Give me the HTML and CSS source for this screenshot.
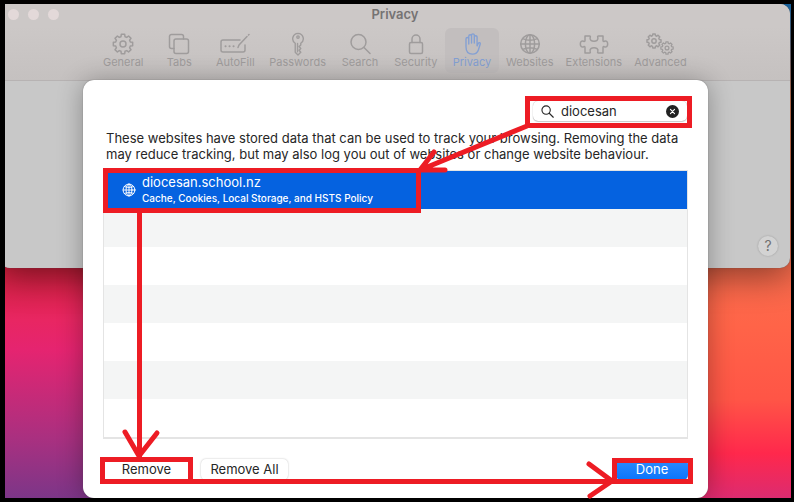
FILE: index.html
```html
<!DOCTYPE html>
<html lang="en">
<head>
  <meta charset="UTF-8" />
  <title>Privacy</title>
  <meta name="viewport" content="width=device-width,initial-scale=1" />
  <link rel="stylesheet" href="styles.css">
</head>
<body>

<!-- Shared icon shapes -->
<svg class="defs" aria-hidden="true">
  <symbol id="globe" viewBox="0 0 22 22">
    <circle cx="11" cy="11" r="9.3"/>
    <ellipse cx="11" cy="11" rx="4.6" ry="9.3"/>
    <path d="M11 1.7v18.6M1.7 11h18.6M3.6 5.6c4.2 1.8 10.6 1.8 14.8 0M3.6 16.4c4.2-1.8 10.6-1.8 14.8 0"/>
  </symbol>
  <symbol id="gear" viewBox="0 0 22 22">
    <circle cx="11" cy="11" r="3"/>
    <path d="M9 3.7L9.3 1.35h3.4L13 3.7l1.75.7L16.6 3 19 5.4l-1.4 1.85.7 1.75 2.35.3v3.4l-2.35.3-.7 1.75L19 16.6 16.6 19l-1.85-1.4-1.75.7-.3 2.35H9.3L9 18.3l-1.75-.7L5.4 19 3 16.6l1.4-1.85L3.7 13l-2.35-.3V9.3L3.7 9l.7-1.75L3 5.4 5.4 3l1.85 1.4z"/>
  </symbol>
</svg>

<div class="desktop">

  <section class="window">
    <header class="titlebar">
      <div class="lights"><i></i><i></i><i></i></div>
      <h1>Privacy</h1>
    </header>
    <nav class="toolbar">
      <button class="tab"><svg viewBox="0 0 22 22"><use href="#gear"/></svg>General</button>
      <button class="tab"><svg viewBox="0 0 22 22"><path d="M6 15.500H3.500a2 2 0 0 1-2-2v-10a2 2 0 0 1 2-2h10a2 2 0 0 1 2 2V6"/><rect x="6" y="6" width="14.500" height="14.500" rx="2"/></svg>Tabs</button>
      <button class="tab"><svg class="wide" viewBox="0 0 30 22"><path d="M20 7H3a2 2 0 0 0-2 2v8a2 2 0 0 0 2 2h20a2 2 0 0 0 2-2v-5M18 14.500l1-2.500 8-8.500M28.500 2l.5-.5"/><path class="dots" d="M5.500 13.200h.1M9.500 13.200h.1M13.500 13.200h.1"/></svg>AutoFill</button>
      <button class="tab"><svg class="tall" viewBox="0 0 16 26"><path d="M8 1.500a5.800 5.800 0 0 0-3 10.700v9.800l3 3 3-3-1.800-2.200 1.800-2-1.800-2L11 14v-1.800A5.800 5.800 0 0 0 8 1.500zM7.500 12.500v9"/><circle cx="8" cy="5.500" r="1.300"/></svg>Passwords</button>
      <button class="tab"><svg viewBox="0 0 22 22"><circle cx="9.500" cy="9" r="7.500"/><path d="M15 14.500l6 6"/></svg>Search</button>
      <button class="tab"><svg viewBox="0 0 22 22"><rect x="4.500" y="9.500" width="13" height="11" rx="1.500"/><path d="M7 9.500V6a4 4 0 0 1 8 0v3.500"/></svg>Security</button>
      <button class="tab active"><svg class="tall" viewBox="0 0 20 26"><path d="M3.500 16V7.500a1.500 1.500 0 0 1 3 0V13 4.500a1.500 1.500 0 0 1 3 0V12 3.500a1.500 1.500 0 0 1 3 0V12 5.500a1.500 1.500 0 0 1 3 0V15l1.200-2.500c.8-1.500 2.600-1 2.200.5l-2 6.500c-1 3.200-3 4.500-6.400 4.500-4.500 0-7-3-7-8z"/></svg>Privacy</button>
      <button class="tab"><svg viewBox="0 0 22 22"><use href="#globe"/></svg>Websites</button>
      <button class="tab"><svg class="wide" viewBox="0 0 30 22"><path d="M6 3h4.500c1 0 1 .8.700 1.500-1.600 5 9.200 5 7.600 0-.3-.7-.3-1.500.7-1.500H24v4.500c0 1 .6 1.200 1.300.8 4.500-2 4.500 7.400 0 5.400-.7-.4-1.300-.2-1.300.8V20h-4.500c-1 0-1-.8-.7-1.500 1.600-5-9.200-5-7.600 0 .3.7.3 1.500-.7 1.500H6v-5.500c0-1-.6-1.200-1.300-.8-4.500 2-4.500-7.400 0-5.400.7.4 1.300.2 1.300-.8z"/></svg>Extensions</button>
      <button class="tab"><svg class="wide gears" viewBox="0 0 30 22"><use href="#gear" x="1" y="0" width="16" height="16"/><use href="#gear" x="15" y="8" width="14" height="14"/></svg>Advanced</button>
    </nav>
    <div class="pane">
      <button class="help" aria-label="Help">?</button>
    </div>
  </section>

  <main class="sheet">
    <div class="search">
      <svg viewBox="0 0 14 14" aria-hidden="true"><circle cx="5.500" cy="5.500" r="4.500"/><path d="M8.900 8.900l4.300 4.300"/></svg>
      <input type="text" value="diocesan" aria-label="Search websites">
      <button class="clear" aria-label="Clear"><svg viewBox="0 0 14 14"><circle cx="7" cy="7" r="7"/><path d="M4.800 4.800l4.400 4.400M9.200 4.800L4.800 9.200"/></svg></button>
    </div>

    <p class="info">These websites have stored data that can be used to track your browsing. Removing the data may reduce tracking, but may also log you out of websites or change website behaviour.</p>

    <ul class="sites">
      <li class="selected">
        <svg viewBox="0 0 22 22"><use href="#globe"/></svg>
        <div>
          <div class="site">diocesan.school.nz</div>
          <div class="kinds">Cache, Cookies, Local Storage, and HSTS Policy</div>
        </div>
      </li>
      <li></li>
      <li></li>
      <li></li>
      <li></li>
      <li></li>
      <li></li>
    </ul>

    <footer class="actions">
      <button>Remove</button>
      <button>Remove All</button>
      <button class="done">Done</button>
    </footer>
  </main>

</div>

<!-- Red boxes and arrows showing the steps -->
<svg class="steps" viewBox="0 0 794 502" preserveAspectRatio="none" aria-hidden="true">
  <path class="box" d="M525 96h167v32H525zM530 101v22h157v-22z"/>
  <path class="box" d="M103 168h318v45H103zM108 173v35h308v-35z"/>
  <path class="box" d="M100 457h93v27h-93zM105 462v17h83v-17z"/>
  <path class="box" d="M612 458h81v26h-81zM617 463v16h71v-16z"/>
  <path class="box" d="M137 213h5v244h-5zM193 479h420v5H193z"/>
  <path class="arrow" d="M527 126L420 170M434 152l-14 18h25"/>
  <path class="arrow" d="M125 432l14 24 18-23"/>
  <path class="arrow" d="M589 464l23 17-22 15"/>
</svg>

</body>
</html>
```

FILE: styles.css
```css
* { box-sizing:border-box; }
body {
  margin:0; height:100vh; padding:4px 3px 4px 5px;
  background:#000; color:#262626;
  font-family:Inter, "Liberation Sans", sans-serif; font-size:13px;
}
button { font:inherit; color:inherit; border:none; background:none; padding:0; margin:0; }
svg { fill:none; stroke:currentColor; stroke-width:1.5; stroke-linejoin:round; stroke-linecap:round; flex-shrink:0; }
.defs { position:absolute; width:0; height:0; }

.desktop {
  position:relative; height:100%; overflow:hidden;
  background:
    linear-gradient(#d5203f 54%, #e82662 64%, #e52470 70%, #a93080 88%, #7c3688) left / 50% 100% no-repeat,
    linear-gradient(#1768a8 0%, #e8845a 20%, #ff6448 65%, #ff5546 80%, #ff284c 91%, #dc2b70) right / 50% 100% no-repeat;
}

/* SETTINGS WINDOW */
.window {
  position:absolute; top:0; left:-5px; right:1px; height:264px;
  display:flex; flex-direction:column;
  background:#c8c8c8; border-radius:0 10px 10px 10px;
  box-shadow:0 0 1px #555, 0 8px 34px rgba(0,0,0,.45);
  overflow:hidden;
}
.titlebar { position:relative; height:22px; background:#ccc8c7; }
.titlebar h1 {
  margin:0; font-size:13px; line-height:20px; font-weight:600;
  text-align:center; color:#757373;
}
.lights { position:absolute; top:5px; left:8px; display:flex; gap:9px; }
.lights i { width:11px; height:11px; border-radius:50%; background:#e3d9d9; }

.toolbar {
  display:flex; justify-content:center; gap:2px;
  height:55px; padding:2px 2px 0 0;
  background:linear-gradient(#ccc8c7, #c5c1c0);
  border-bottom:1px solid #b7b3b3;
}
.tab {
  display:flex; flex-direction:column; align-items:center;
  min-width:54px; height:45px; padding:4px 5px 0; border-radius:6px;
  font-size:11px; line-height:13px; color:#9f9c9c;
}
.tab svg { width:22px; height:22px; margin:1px 0; }
.tab svg.wide { width:30px; }
.tab svg.tall { height:24px; margin:0; }
.tab svg.gears { stroke-width:2; }
.tab .dots { stroke-width:2; }
.tab.active { background:#c2bebe; color:#84a0d3; }

.pane {
  flex:1; display:flex; align-items:flex-end; justify-content:flex-end;
  padding:12px;
}
.help {
  width:20px; height:20px; border-radius:50%;
  background:#d3d3d3; color:#707070; font-size:14px; line-height:20px;
  box-shadow:0 0 2px rgba(0,0,0,.25);
}

/* SHEET */
.sheet {
  position:absolute; top:76px; bottom:0; left:78px; right:83px;
  display:flex; flex-direction:column;
  padding:21px 20px 18px; border-radius:11px;
  background:#fff; box-shadow:0 0 1px #555, 0 2px 26px rgba(0,0,0,.32);
}
.search {
  align-self:flex-end; display:flex; align-items:center; gap:7px;
  width:154px; height:20px; padding:0 8px; margin-right:1px;
  border-radius:5px; box-shadow:0 0 1px #aaa, 0 1px 1px #ccc;
}
.search svg { display:block; width:13px; height:13px; stroke-width:1.2; }
.search input {
  flex:1; min-width:0; padding:0; border:none; outline:none; background:none;
  font:inherit; color:inherit;
}
.clear circle { fill:#222; stroke:none; }
.clear path { stroke:#fff; }
.info { margin:9px 0 8px; padding:0 3px; line-height:16px; }

.sites { list-style:none; margin:0; padding:0; border:1px solid #e4e4e4; border-bottom-width:2px; }
.sites li { display:flex; align-items:center; height:38px; gap:6px; padding:0 18px; }
.sites li:nth-child(even) { background:#f4f5f5; }
.sites .selected { background:#0562e0; color:#fff; }
.sites svg { width:14px; height:14px; }
.site { line-height:16px; }
.kinds { font-size:10px; line-height:16px; font-weight:500; }

.actions { display:flex; gap:11px; margin-top:auto; }
.actions button {
  width:87px; height:21px; border-radius:5px; line-height:21px;
  box-shadow:0 0 2px #bbb;
}
.actions .done {
  width:72px; margin-left:auto; color:#fff;
  background:linear-gradient(#2f8cff, #0a75fb);
}

/* ANNOTATIONS */
.steps { position:absolute; top:0; left:0; width:100%; height:100%; pointer-events:none; }
.steps .box { fill:#ed1c24; fill-rule:evenodd; stroke:none; }
.steps .arrow { stroke:#ed1c24; stroke-width:5; }
```
